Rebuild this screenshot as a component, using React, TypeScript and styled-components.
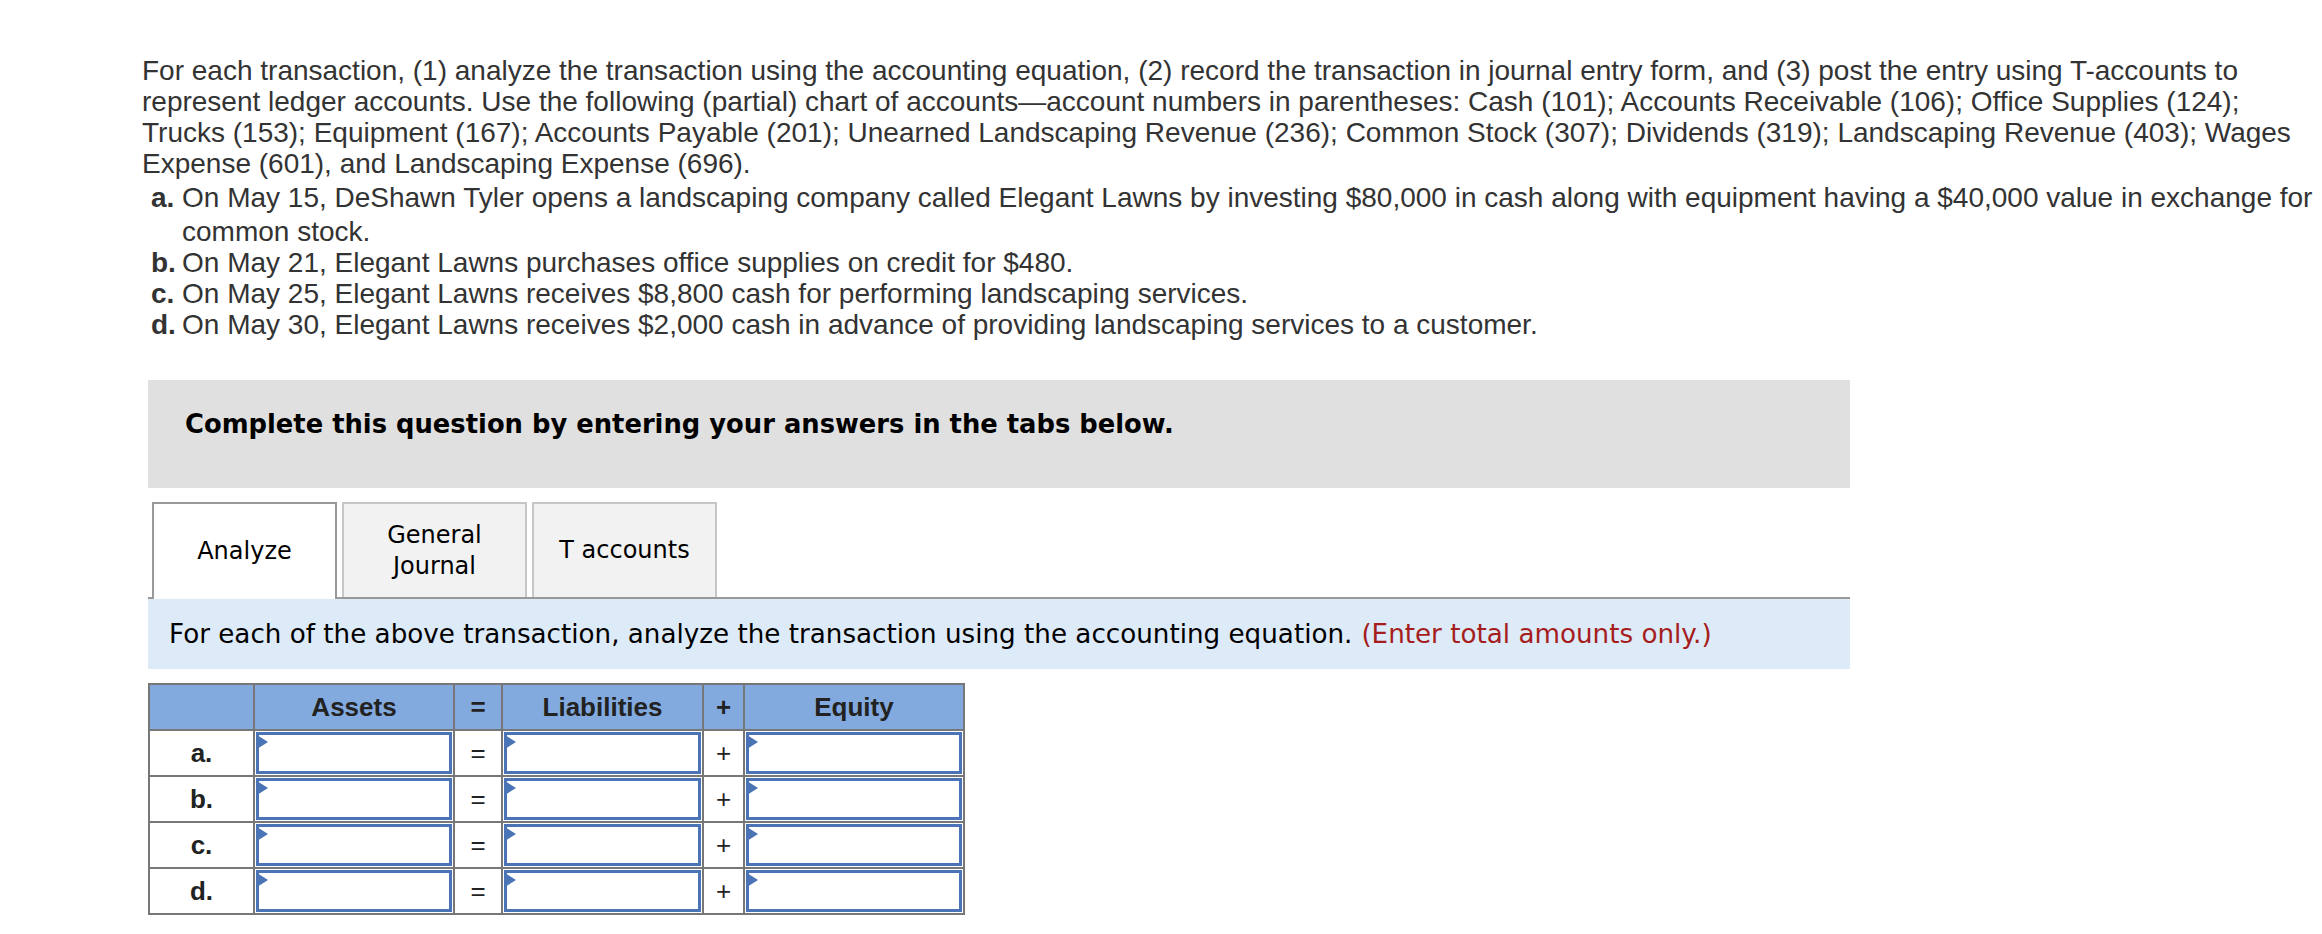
import React from 'react';
import styled, { createGlobalStyle } from 'styled-components';

const GlobalStyle = createGlobalStyle`
  html, body {
    margin: 0;
    padding: 0;
    background: #ffffff;
  }
`;

const Page = styled.div`
  padding: 55px 0 0 148px;
  width: 2174px;
`;

const Question = styled.div`
  margin-left: -6px;
  font-family: 'Liberation Sans', Arial, sans-serif;
  font-size: 28px;
  line-height: 31px;
  color: #333333;
`;

const Line = styled.div<{ $gap?: number }>`
  white-space: nowrap;
  margin-top: ${(p) => p.$gap ?? 0}px;
`;

const Items = styled.div`
  margin-top: 3px;
`;

const Item = styled.div`
  display: flex;
  padding-left: 9px;
`;

const ItemLabel = styled.span`
  font-weight: bold;
  width: 31px;
  flex-shrink: 0;
`;

const Panel = styled.div`
  width: 1702px;
`;

const Banner = styled.div`
  margin-top: 40px;
  height: 108px;
  box-sizing: border-box;
  padding: 27px 37px 0;
  background: #e0e0e0;
  font-family: 'DejaVu Sans', Verdana, sans-serif;
  font-weight: bold;
  font-size: 25.8px;
  line-height: 34px;
  color: #000000;
  white-space: nowrap;
`;

const TabRow = styled.div`
  display: flex;
  gap: 5px;
  margin-top: 14px;
  padding-left: 4px;
  border-bottom: 2px solid #999999;
`;

const Tab = styled.div<{ $active?: boolean }>`
  width: 185px;
  box-sizing: border-box;
  display: flex;
  align-items: center;
  justify-content: center;
  text-align: center;
  border: 2px solid ${(p) => (p.$active ? '#999999' : '#c6c6c6')};
  border-bottom: none;
  margin-bottom: ${(p) => (p.$active ? '-2px' : '0')};
  height: ${(p) => (p.$active ? '97px' : '95px')};
  background: ${(p) => (p.$active ? '#ffffff' : '#f2f2f2')};
  font-family: 'DejaVu Sans', Verdana, sans-serif;
  font-size: 24px;
  line-height: 31px;
  color: #000000;
`;

const Instruction = styled.div`
  height: 70px;
  box-sizing: border-box;
  padding: 0 21px;
  display: flex;
  align-items: center;
  background: #ddeaf7;
  font-family: 'DejaVu Sans', Verdana, sans-serif;
  font-size: 26.2px;
  color: #000000;
  white-space: nowrap;
`;

const Note = styled.span`
  color: #a51d1d;
  margin-left: 9px;
`;

const Table = styled.table`
  margin-top: 14px;
  border-collapse: collapse;
  border: 2px solid #777777;
  font-family: 'Liberation Sans', Arial, sans-serif;
  color: #222222;
`;

const HeadCell = styled.th<{ $w: number }>`
  width: ${(p) => p.$w}px;
  height: 44px;
  padding: 0;
  border: 2px solid #777777;
  background: #82aadf;
  font-size: 26px;
  font-weight: bold;
  text-align: center;
`;

const LabelCell = styled.td`
  height: 44px;
  padding: 0;
  border: 2px solid #777777;
  text-align: center;
  font-size: 26px;
  font-weight: bold;
  background: #ffffff;
`;

const SignCell = styled.td`
  padding: 0;
  border: 2px solid #777777;
  text-align: center;
  font-size: 26px;
  background: #ffffff;
`;

const InputCell = styled.td`
  padding: 1px;
  border: 2px solid #777777;
  background: #ffffff;
`;

const Field = styled.div`
  position: relative;
  height: 42px;
  box-sizing: border-box;
  border: 3px solid #4a74b5;
  background: #ffffff;
`;

const Marker = styled.span`
  position: absolute;
  left: -2px;
  top: 0;
  width: 0;
  height: 0;
  border-top: 7px solid transparent;
  border-bottom: 7px solid transparent;
  border-left: 11px solid #4a74b5;
`;

const BlankInput = styled.input`
  width: 100%;
  height: 100%;
  box-sizing: border-box;
  border: none;
  outline: none;
  background: transparent;
  padding: 0 10px;
  font-size: 22px;
`;

const rows = ['a.', 'b.', 'c.', 'd.'];

function EntryField() {
  return (
    <Field>
      <Marker />
      <BlankInput type="text" />
    </Field>
  );
}

export default function App() {
  return (
    <>
      <GlobalStyle />
      <Page>
        <Question>
          <Line>
            For each transaction, (1) analyze the transaction using the accounting equation, (2) record the transaction in journal entry form, and (3) post the entry using T-accounts to
          </Line>
          <Line>
            represent ledger accounts. Use the following (partial) chart of accounts—account numbers in parentheses: Cash (101); Accounts Receivable (106); Office Supplies (124);
          </Line>
          <Line>
            Trucks (153); Equipment (167); Accounts Payable (201); Unearned Landscaping Revenue (236); Common Stock (307); Dividends (319); Landscaping Revenue (403); Wages
          </Line>
          <Line>Expense (601), and Landscaping Expense (696).</Line>
          <Items>
            <Item>
              <ItemLabel>a.</ItemLabel>
              <div>
                <Line>
                  On May 15, DeShawn Tyler opens a landscaping company called Elegant Lawns by investing $80,000 in cash along with equipment having a $40,000 value in exchange for
                </Line>
                <Line $gap={3}>common stock.</Line>
              </div>
            </Item>
            <Item>
              <ItemLabel>b.</ItemLabel>
              <Line>On May 21, Elegant Lawns purchases office supplies on credit for $480.</Line>
            </Item>
            <Item>
              <ItemLabel>c.</ItemLabel>
              <Line>On May 25, Elegant Lawns receives $8,800 cash for performing landscaping services.</Line>
            </Item>
            <Item>
              <ItemLabel>d.</ItemLabel>
              <Line>On May 30, Elegant Lawns receives $2,000 cash in advance of providing landscaping services to a customer.</Line>
            </Item>
          </Items>
        </Question>

        <Panel>
          <Banner>Complete this question by entering your answers in the tabs below.</Banner>

          <TabRow>
            <Tab $active>Analyze</Tab>
            <Tab>
              General
              <br />
              Journal
            </Tab>
            <Tab>T accounts</Tab>
          </TabRow>

          <Instruction>
            For each of the above transaction, analyze the transaction using the accounting equation.
            <Note>(Enter total amounts only.)</Note>
          </Instruction>
        </Panel>

        <Table>
          <thead>
            <tr>
              <HeadCell $w={103} />
              <HeadCell $w={198}>Assets</HeadCell>
              <HeadCell $w={46}>=</HeadCell>
              <HeadCell $w={199}>Liabilities</HeadCell>
              <HeadCell $w={39}>+</HeadCell>
              <HeadCell $w={218}>Equity</HeadCell>
            </tr>
          </thead>
          <tbody>
            {rows.map((r) => (
              <tr key={r}>
                <LabelCell>{r}</LabelCell>
                <InputCell>
                  <EntryField />
                </InputCell>
                <SignCell>=</SignCell>
                <InputCell>
                  <EntryField />
                </InputCell>
                <SignCell>+</SignCell>
                <InputCell>
                  <EntryField />
                </InputCell>
              </tr>
            ))}
          </tbody>
        </Table>
      </Page>
    </>
  );
}
